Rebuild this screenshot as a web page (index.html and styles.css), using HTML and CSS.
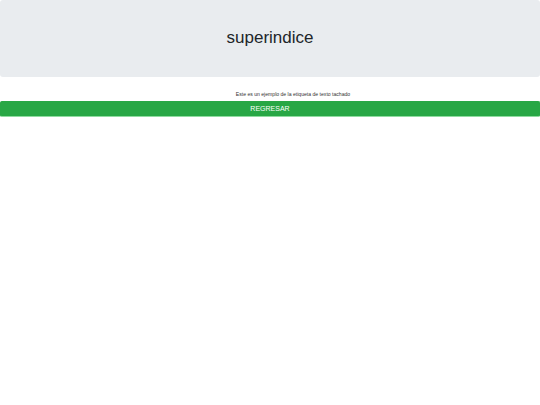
FILE: index.html
```html
<!DOCTYPE html>
<html lang="es">
<head>
<meta charset="utf-8">
<title>superindice</title>
<link rel="stylesheet" href="styles.css">
</head>
<body>
<header class="jumbotron">
  <h1 class="title">superindice</h1>
</header>
<p class="note">Este es un ejemplo de la etiqueta de texto tachado</p>
<button class="btn-back" type="button">REGRESAR</button>
</body>
</html>
```
FILE: styles.css
```css
html, body {
  margin: 0;
  padding: 0;
  background: #fff;
  font-family: "Liberation Sans", Arial, sans-serif;
  color: #212529;
}
.jumbotron {
  background: #e9ecef;
  border-radius: 3px;
  height: 77px;
  display: flex;
  align-items: center;
  justify-content: center;
  margin-bottom: 13px;
}
.title {
  margin: 0;
  font-size: 17px;
  font-weight: 400;
  line-height: 1.2;
  padding-bottom: 1px;
}
.note {
  margin: 0 0 3px;
  padding-left: 46px;
  text-align: center;
  font-size: 5.1px;
  line-height: 8px;
  color: #333;
}
.btn-back {
  display: block;
  width: 100%;
  height: 16px;
  margin: 0;
  padding: 0;
  border: 1px solid #28a745;
  border-bottom-color: #8fdca0;
  border-radius: 2px;
  background: #28a745;
  color: #fff;
  font-family: "Liberation Sans", Arial, sans-serif;
  font-size: 7px;
  line-height: 14px;
}
```
